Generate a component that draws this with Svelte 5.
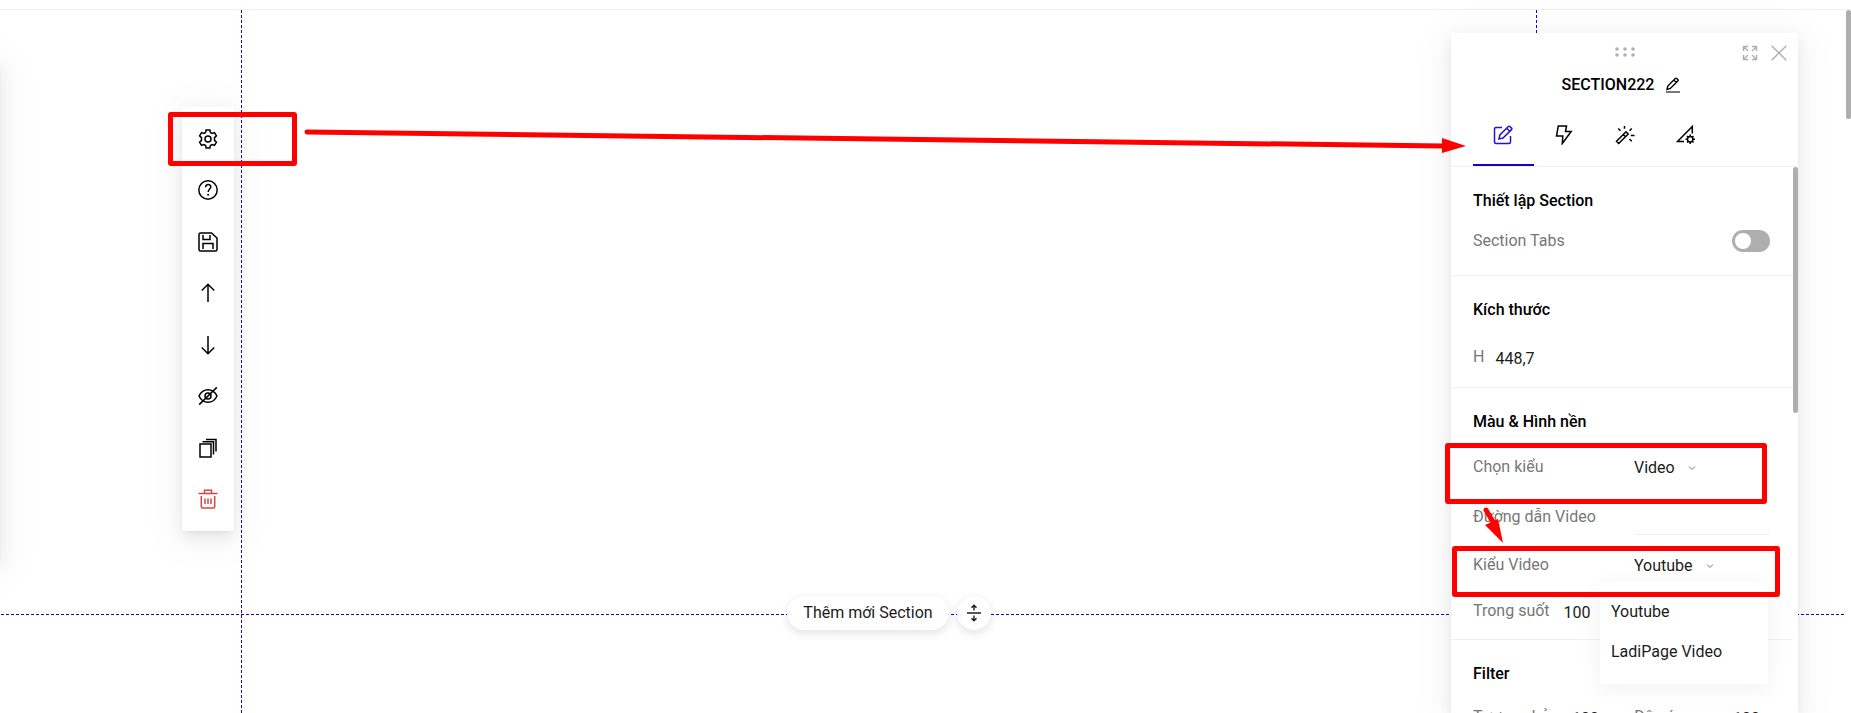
<script>
  const tools = ['settings', 'help', 'save', 'up', 'down', 'hide', 'duplicate', 'delete'];
  const toolLabels = {
    settings: 'Cài đặt',
    help: 'Trợ giúp',
    save: 'Lưu',
    up: 'Lên',
    down: 'Xuống',
    hide: 'Ẩn',
    duplicate: 'Nhân bản',
    delete: 'Xóa'
  };
  const tabs = ['edit', 'event', 'effect', 'advanced'];
  const videoTypes = ['Youtube', 'LadiPage Video'];

  let activeTab = 'edit';
  let sectionTabs = false;
  let height = '448,7';
  let background = 'Video';
  let videoUrl = '';
  let videoType = 'Youtube';
  let opacity = '100';
  let contrast = '100';
  let brightness = '100';
  let menuOpen = true;

  function pickVideoType(type) {
    videoType = type;
    menuOpen = false;
  }
</script>

{#snippet icon(name)}
  <svg class="icon" viewBox="0 0 20 20" width="20" height="20" aria-hidden="true">
    {#if name === 'settings'}
      <path d="M8.1 1h3.8l.5 2.5 1.7 1 2.4-.9 1.9 3.3-1.9 1.7v2.8l1.9 1.7-1.9 3.3-2.4-.9-1.7 1-.5 2.5H8.1l-.5-2.5-1.7-1-2.4.9-1.9-3.3 1.9-1.7V8.6L1.6 6.9l1.9-3.3 2.4.9 1.7-1z" />
      <circle cx="10" cy="10" r="3" />
    {:else if name === 'help'}
      <circle cx="10" cy="10" r="9.2" />
      <path d="M7.6 7.2c.1-3.4 5.2-3.4 5.2-.4 0 2.3-2.6 2.3-2.6 5.2" />
      <circle class="fill" cx="10.1" cy="14.7" r="1" />
    {:else if name === 'save'}
      <path d="M1 2.5C1 1.5 1.5 1 2.5 1h11L19 6v11.500c0 1-.5 1.500-1.500 1.500h-15c-1 0-1.500-.5-1.500-1.500z" />
      <path d="M5 3v4.500h7V3M5 17v-5.500h10V17" />
    {:else if name === 'up'}
      <path d="M10 19V1.500M3.800 7.500 10 1.300l6.200 6.200" />
    {:else if name === 'down'}
      <path d="M10 1v17.500M3.800 12.500l6.200 6.200 6.200-6.200" />
    {:else if name === 'hide'}
      <path d="M1 10c2-4.300 5-6.300 9-6.300s7 2 9 6.300c-2 4.300-5 6.300-9 6.300S3 14.300 1 10z" />
      <circle cx="10" cy="10" r="3" />
      <path d="M1.200 18.600 18.800 1.400" />
    {:else if name === 'duplicate'}
      <path d="M2 6h11v13H2zM4.500 3.800h11V16.500M8 1.500h10V13.500" />
    {:else if name === 'delete'}
      <path d="M.5 4.500h19M6.500 4V1.200h7V4M3.300 7v10.500c0 1 .5 1.500 1.500 1.500h10.400c1 0 1.500-.5 1.500-1.500V7M7 9.500v5.500M10 9.500v5.500M13 9.500v5.500" />
    {:else if name === 'edit'}
      <path d="M9 2.500H3C2 2.500 1.500 3 1.500 4v13c0 1 .5 1.500 1.500 1.500h13c1 0 1.500-.5 1.500-1.500v-6" />
      <path d="m6 14 .9-4 8.500-8.500c.5-.5 1-.5 1.500 0l1.600 1.600c.5.500.5 1 0 1.500L10 13.100zM13.700 3.200l3.100 3.100" />
    {:else if name === 'event'}
      <path d="M4.300 1h8.200l-1 5.500h5.700L8.300 18.500l.5-7.500H2.500z" />
    {:else if name === 'effect'}
      <path d="M1.500 16.300 11 6.800l2.200 2.200-9.500 9.500zM8.300 9.500l2.200 2.200M9.500 1v2.800M3.200 3.500l2.300 2.300M16.800 3.500l-2.300 2.300M15.800 10.500h3.700M14.500 14l2.300 2.300" />
    {:else if name === 'advanced'}
      <path d="M8 16.500H1.500L16.300 1.500v7" />
      <circle cx="14.200" cy="14.200" r="2.700" />
      <path d="M14.200 9.500v2M14.200 17v2M9.500 14.200h2M17 14.200h2M11 11l1.300 1.300M16.200 16.200l1.300 1.300M17.500 11l-1.300 1.300M12.200 16.200 11 17.500" />
    {/if}
  </svg>
{/snippet}

{#snippet chevron()}
  <svg class="chevron" viewBox="0 0 8 8" width="8" height="8" aria-hidden="true">
    <path d="m1 2.500 3 3 3-3" />
  </svg>
{/snippet}

<div class="editor">
  <header class="topbar"></header>

  <main class="canvas">
    <div class="left-drawer"></div>
    <div class="section-line"></div>
    <div class="page">
      <div class="add-section">
        <button class="add">Thêm mới Section</button>
        <button class="resize" aria-label="Thay đổi chiều cao">
          <svg viewBox="0 0 16 20" width="16" height="20" aria-hidden="true">
            <path d="M1 10h14M8 7.500V2.500M5.500 4.700 8 2.200l2.500 2.500M8 12.500v5M5.500 15.300 8 17.800l2.500-2.500" />
          </svg>
        </button>
      </div>
    </div>
    <div class="page-scroll"></div>
  </main>

  <nav class="toolbar">
    {#each tools as tool}
      <button class="tool" class:danger={tool === 'delete'} aria-label={toolLabels[tool]}>
        {@render icon(tool)}
      </button>
    {/each}
  </nav>

  <aside class="panel">
    <div class="panel-head">
      <div class="handle-row">
        <svg class="dots" viewBox="0 0 20 10" width="20" height="10" aria-hidden="true">
          <circle cx="2" cy="2" r="1.800" /><circle cx="10" cy="2" r="1.800" /><circle cx="18" cy="2" r="1.800" />
          <circle cx="2" cy="8" r="1.800" /><circle cx="10" cy="8" r="1.800" /><circle cx="18" cy="8" r="1.800" />
        </svg>
        <div class="window-actions">
          <button aria-label="Mở rộng">
            <svg viewBox="0 0 16 16" width="16" height="16" aria-hidden="true">
              <path d="M6 1.500H1.500V6M10 1.500h4.500V6M6 14.500H1.500V10M10 14.500h4.500V10M1.500 1.500l4.500 4.500M14.500 1.500 10 6M1.500 14.500 6 10M14.500 14.500 10 10" />
            </svg>
          </button>
          <button aria-label="Đóng">
            <svg viewBox="0 0 16 16" width="16" height="16" aria-hidden="true">
              <path d="m.7.7 14.600 14.600M15.300.7.7 15.300" />
            </svg>
          </button>
        </div>
      </div>
      <div class="title-row">
        <span>SECTION222</span>
        <button aria-label="Đổi tên">
          <svg viewBox="0 0 16 16" width="16" height="16" aria-hidden="true">
            <path d="m2 12.500.8-3.500 7.500-7.500c.5-.5 1-.5 1.500 0l1 1c.5.500.5 1 0 1.500l-7.500 7.500zM8.800 3l2.500 2.500" />
            <path class="base" d="M1 15h14" />
          </svg>
        </button>
      </div>
      <div class="tabs" role="tablist">
        {#each tabs as tab}
          <button
            class="tab"
            class:active={activeTab === tab}
            role="tab"
            aria-label={tab}
            aria-selected={activeTab === tab}
            onclick={() => (activeTab = tab)}
          >
            {@render icon(tab)}
          </button>
        {/each}
      </div>
    </div>

    <div class="panel-body">
      <section class="group setup">
        <h2>Thiết lập Section</h2>
        <div class="row spread">
          <label for="section-tabs">Section Tabs</label>
          <input id="section-tabs" class="switch" type="checkbox" bind:checked={sectionTabs} />
        </div>
      </section>

      <section class="group size">
        <h2>Kích thước</h2>
        <div class="row tall">
          <label for="height">H</label>
          <input id="height" class="number wide" type="text" bind:value={height} />
        </div>
      </section>

      <section class="group">
        <h2>Màu &amp; Hình nền</h2>
        <div class="row columns">
          <label for="background">Chọn kiểu</label>
          <div class="select">
            <select id="background" bind:value={background}>
              <option>Video</option>
            </select>
            {@render chevron()}
          </div>
        </div>
        <div class="row columns url">
          <label for="video-url">Đường dẫn Video</label>
          <input id="video-url" class="text" type="text" bind:value={videoUrl} />
        </div>
        <div class="row columns">
          <label for="video-type">Kiểu Video</label>
          <div class="select">
            <select id="video-type" bind:value={videoType}>
              {#each videoTypes as type}
                <option>{type}</option>
              {/each}
            </select>
            {@render chevron()}
            {#if menuOpen}
              <div class="menu">
                {#each videoTypes as type}
                  <button onclick={() => pickVideoType(type)}>{type}</button>
                {/each}
              </div>
            {/if}
          </div>
        </div>
        <div class="row short">
          <label for="opacity">Trong suốt</label>
          <input id="opacity" class="number" type="text" bind:value={opacity} />
        </div>
      </section>

      <section class="group">
        <h2>Filter</h2>
        <div class="row columns short">
          <div class="pair">
            <label for="contrast">Tương phản</label>
            <input id="contrast" class="number" type="text" bind:value={contrast} />
          </div>
          <div class="pair spread">
            <label for="brightness">Độ sáng</label>
            <input id="brightness" class="number" type="text" bind:value={brightness} />
          </div>
        </div>
      </section>
      <div class="panel-scroll"></div>
    </div>
  </aside>

  <div class="mark mark-settings"></div>
  <div class="mark mark-background"></div>
  <div class="mark mark-video"></div>
  <svg class="long-arrow" height="30" aria-hidden="true">
    <svg viewBox="0 0 1160 30" width="100%" height="30" preserveAspectRatio="none">
      <path d="M3 9 1137 23" />
    </svg>
    <svg x="100%" overflow="visible">
      <polygon points="-24,15 0,23 -24,30" />
    </svg>
  </svg>
  <svg class="short-arrow" viewBox="0 0 24 38" width="24" height="38" aria-hidden="true">
    <path d="M5 4 12 16" />
    <polygon points="4,19 17,13 22,37" />
  </svg>
</div>

<style>
  :global(body) {
    margin: 0;
    background: #fff;
    font-family: Roboto, 'Liberation Sans', sans-serif;
  }

  .editor {
    --line: #f0f0f0;
    --blue: #1c00c2;
    --shadow: 0 3px 6px -4px rgba(0, 0, 0, 0.12), 0 6px 16px rgba(0, 0, 0, 0.08),
      0 6px 36px 12px rgba(0, 0, 0, 0.03);
    position: relative;
    display: flex;
    flex-direction: column;
    height: 100vh;
    overflow: hidden;
    color: #1c1c1c;
    font-size: 16px;
    line-height: 24px;
  }

  button,
  input,
  select {
    margin: 0;
    padding: 0;
    border: 0;
    background: none;
    color: inherit;
    font: inherit;
    outline: none;
  }

  button {
    cursor: pointer;
  }

  svg {
    display: block;
    fill: none;
    stroke: currentColor;
    stroke-width: 1.4;
  }

  .icon {
    stroke-width: 1.5;
  }

  .icon .fill {
    fill: currentColor;
    stroke: none;
  }

  .topbar {
    height: 9px;
    border-bottom: 1px solid var(--line);
  }

  .canvas {
    position: relative;
    flex: 1;
  }

  .left-drawer {
    position: absolute;
    top: 50px;
    bottom: 153px;
    right: 100%;
    width: 300px;
    box-shadow: var(--shadow);
  }

  .section-line {
    position: absolute;
    top: 604px;
    left: 0;
    right: 5px;
    height: 1px;
    background: repeating-linear-gradient(90deg, transparent 0 1px, var(--blue) 1px 4px, transparent 4px 5px);
  }

  .page {
    position: absolute;
    inset: 0 314px 0 241px;
  }

  .page::before,
  .page::after {
    content: '';
    position: absolute;
    top: 0;
    bottom: 0;
    left: 0;
    width: 1px;
    background: repeating-linear-gradient(var(--blue) 0 3px, transparent 3px 5px);
  }

  .page::after {
    right: 0;
    left: auto;
  }

  .add-section {
    display: flex;
    justify-content: center;
    align-items: center;
    gap: 8px;
    padding-top: 586px;
  }

  .add,
  .resize {
    position: relative;
    height: 34px;
    border-radius: 17px;
    background: #fff;
    box-shadow: 0 3px 10px rgba(0, 0, 0, 0.12);
  }

  .add {
    padding: 0 16px;
  }

  .resize {
    display: grid;
    place-items: center;
    width: 34px;
  }

  .page-scroll {
    position: absolute;
    top: 0;
    right: 0;
    width: 5px;
    height: 109px;
    border-radius: 3px;
    background: #aeaeae;
  }

  .toolbar {
    position: absolute;
    top: 107px;
    left: 182px;
    display: flex;
    flex-direction: column;
    justify-content: space-between;
    box-sizing: border-box;
    width: 52px;
    height: 424px;
    padding: 16px 0;
    border-radius: 3px;
    background: #fff;
    box-shadow: var(--shadow);
    color: #000;
  }

  .tool {
    display: grid;
    place-items: center;
    height: 32px;
  }

  .danger {
    color: #d9443f;
  }

  .panel {
    position: absolute;
    top: 33px;
    right: 53px;
    bottom: 0;
    z-index: 0;
    display: flex;
    flex-direction: column;
    width: 347px;
    border-radius: 3px 3px 0 0;
    background: #fff;
    box-shadow: var(--shadow);
  }

  .panel-head {
    padding-top: 3px;
    border-bottom: 1px solid var(--line);
    color: #000;
  }

  .handle-row {
    display: grid;
    grid-template-columns: 1fr auto 1fr;
    align-items: center;
    height: 32px;
    color: #aeaeae;
  }

  .dots {
    grid-column: 2;
    fill: currentColor;
    stroke: none;
  }

  .window-actions {
    display: flex;
    justify-content: flex-end;
    gap: 13px;
    padding: 2px 11px 0 0;
  }

  .title-row {
    display: flex;
    justify-content: center;
    align-items: center;
    gap: 11px;
    height: 34px;
    padding-right: 6px;
    font-weight: 500;
  }

  .title-row .base {
    stroke: #777;
    stroke-width: 2;
  }

  .tabs {
    display: flex;
    margin-top: 1px;
    padding: 0 22px;
  }

  .tab {
    display: grid;
    place-items: center;
    box-sizing: border-box;
    width: 61px;
    height: 63px;
    padding: 2px 2px 0 0;
    border-bottom: 2px solid transparent;
  }

  .tab.active {
    border-color: var(--blue);
    color: #2a10d0;
  }

  .panel-body {
    position: relative;
    flex: 1;
    overflow: hidden;
  }

  .panel-scroll {
    position: absolute;
    top: 0;
    right: 0;
    width: 5px;
    height: 246px;
    border-radius: 3px;
    background: #aeaeae;
  }

  .group {
    margin-right: 5px;
    padding: 22px 23px 14px 22px;
    border-bottom: 1px solid var(--line);
  }

  .setup {
    padding-bottom: 23px;
  }

  .size {
    padding-bottom: 12px;
  }

  h2 {
    margin: 0 0 17px;
    color: #000;
    font-size: 16px;
    font-weight: 500;
    line-height: 24px;
  }

  .row {
    display: flex;
    align-items: center;
    height: 32px;
  }

  .row + .row {
    margin-top: 16px;
  }

  .row.spread {
    height: 22px;
  }

  .row.tall {
    height: 36px;
  }

  .row.short {
    height: 28px;
  }

  .row.url {
    height: 34px;
  }

  .columns {
    display: grid;
    grid-template-columns: 161px 1fr;
  }

  .pair {
    display: flex;
    align-items: center;
  }

  .spread {
    justify-content: space-between;
  }

  label {
    color: #777;
  }

  .switch {
    appearance: none;
    display: flex;
    box-sizing: border-box;
    width: 38px;
    height: 22px;
    padding: 3px;
    border-radius: 11px;
    background: #aeaeae;
    cursor: pointer;
  }

  .switch::before {
    content: '';
    width: 16px;
    height: 16px;
    border-radius: 50%;
    background: #fff;
  }

  .switch:checked {
    justify-content: flex-end;
    background: var(--blue);
  }

  .number {
    width: 50px;
    height: 26px;
    padding: 2px 0 0 14px;
    box-sizing: border-box;
  }

  .pair.spread .number {
    width: 37px;
    padding-left: 0;
  }

  .number.wide {
    width: 80px;
    padding-left: 11px;
  }

  .text {
    box-sizing: border-box;
    width: 100%;
    height: 36px;
    border-bottom: 1px solid var(--line);
  }

  .select {
    position: relative;
    display: flex;
    align-items: center;
    gap: 13px;
    padding-top: 2px;
  }

  select {
    appearance: none;
    field-sizing: content;
    height: 24px;
  }

  .chevron {
    color: #777;
    stroke-width: 1;
    pointer-events: none;
  }

  .menu {
    position: absolute;
    top: 30px;
    left: -34px;
    z-index: 1;
    display: flex;
    flex-direction: column;
    box-sizing: border-box;
    width: 168px;
    height: 102px;
    padding: 10px 0;
    border-radius: 3px;
    background: #fff;
    box-shadow: 0 4px 24px rgba(0, 40, 40, 0.06);
  }

  .menu button {
    height: 40px;
    padding: 0 11px;
    text-align: left;
  }

  .mark {
    position: absolute;
    box-sizing: border-box;
    border: 5px solid #f00;
    border-radius: 3px;
    pointer-events: none;
  }

  .mark-settings {
    top: 112px;
    left: 168px;
    width: 129px;
    height: 54px;
  }

  .mark-background {
    top: 443px;
    right: 84px;
    width: 322px;
    height: 61px;
  }

  .mark-video {
    top: 546px;
    right: 71px;
    width: 328px;
    height: 51px;
  }

  .long-arrow,
  .short-arrow {
    position: absolute;
    overflow: visible;
    color: #f00;
    stroke-width: 5;
    stroke-linecap: round;
    pointer-events: none;
  }

  .long-arrow polygon,
  .short-arrow polygon {
    fill: currentColor;
    stroke: none;
  }

  .long-arrow {
    top: 123px;
    left: 304px;
    width: calc(100% - 689px);
  }

  .long-arrow svg {
    color: inherit;
    stroke-width: 5;
  }

  .short-arrow {
    top: 506px;
    right: 346px;
  }
</style>
